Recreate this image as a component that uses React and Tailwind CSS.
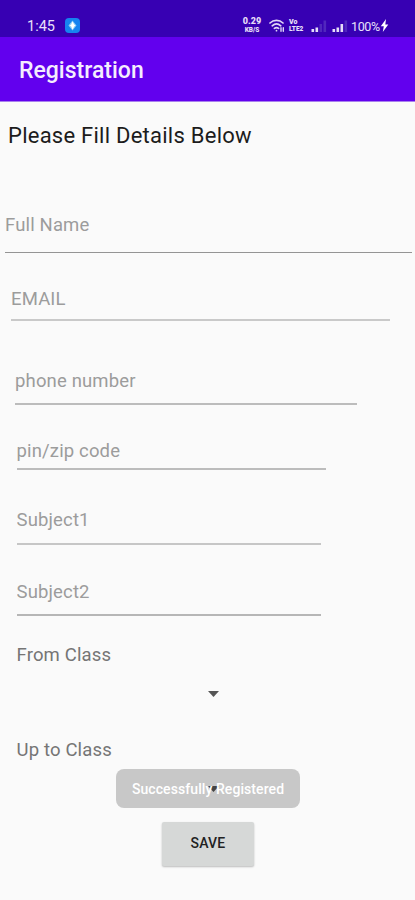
import {useState} from "react";

const FIELDS = [
    {name: 'fullName', label: 'Full Name', box: 'mt-[62px] ml-[5px] w-[407px] pb-[15px] border-[#949494]', line: 'border-b-[1.5px]'},
    {name: 'email', label: 'EMAIL', box: 'mt-[34px] ml-[11px] w-[379px] pb-2 border-[#c9c9c9]', line: 'border-b-2'},
    {name: 'phone', label: 'phone number', box: 'mt-12 ml-[15px] w-[342px] pb-2.5 border-[#bcbcbc]', line: 'border-b-2'},
    {name: 'pin', label: 'pin/zip code', box: 'mt-[34px] ml-[16.5px] w-[309px] pb-[5px] border-[#bcbcbc]', line: 'border-b-2'},
    {name: 'subject1', label: 'Subject1', box: 'mt-[38px] ml-[16.5px] w-[304px] pb-[11px] border-[#c6c6c6]', line: 'border-b-2'},
    {name: 'subject2', label: 'Subject2', box: 'mt-[35px] ml-[16.5px] w-[304px] pb-2.5 border-[#b6b6b6]', line: 'border-b-2'},
]

function NetSpeed() {
    return (
        <div className="-mb-px flex w-5 flex-col items-center font-black text-[#e6dcf8]">
            <span className="text-[9px] leading-[11px]">0.29</span>
            <span className="text-[6.5px] leading-[7px]">KB/S</span>
        </div>
    )
}

function WifiIcon() {
    return (
        <svg width="16" height="14" viewBox="0 0 16 14" fill="none" stroke="#e0d6f6" strokeWidth="1.7" strokeLinecap="round">
            <path d="M1 4C4.6 .6 10.4 .6 14 4"/>
            <path d="M3.2 6.8c2.6-2.2 6-2.2 8.6 0"/>
            <path d="M5.4 9.4c1.3-1 2.9-1 4.2 0"/>
            <path d="M7.5 11.6v.1"/>
            <path d="M12 8.8v3.4M14.3 8.8v3.4" strokeWidth="1.4"/>
        </svg>
    )
}

function SignalIcon({level}) {
    return (
        <svg width="16" height="12" viewBox="0 0 16 12">
            {[3, 4.5, 8, 11.5].map((h, i) => (
                <rect key={i} x={0.5 + i * 4} y={12 - h} width="2.6" height={h}
                      fill={i < level ? '#e6dcf8' : '#5127bd'}/>
            ))}
        </svg>
    )
}

function StatusBar() {
    return (
        <div className="flex h-[37px] items-end bg-[#3700b3] pb-1 pl-[27px] text-[#e9e0fa]">
            <span className="-mb-px w-[38px] text-[14.5px] leading-[14px]">1:45</span>
            <div className="flex size-[15px] items-center justify-center rounded-[4px] bg-[#1683f0]">
                <svg width="11" height="11" viewBox="0 0 11 11">
                    <path d="M5.5.5 9.5 5.5 5.5 10.5 1.5 5.5z" fill="#8fcdf8"/>
                    <path d="M5.5 1.5 7.2 4.6 8.5 5.5 7.2 6.6 5.5 9.5 4.2 6.6 2.8 5.5 4.2 4.6z" fill="#fff"/>
                </svg>
            </div>
            <div className="ml-[162px] flex items-end">
                <NetSpeed/>
                <div className="ml-[7px]"><WifiIcon/></div>
                <div className="ml-[4px] flex w-[17px] flex-col font-black">
                    <span className="text-[7px] leading-[8px]">Vo</span>
                    <span className="text-[6.5px] leading-[7px]">LTE2</span>
                </div>
                <div className="ml-[5px] pb-px"><SignalIcon level={2}/></div>
                <div className="ml-[5px] pb-px"><SignalIcon level={3}/></div>
                <span className="ml-[3px] text-[12.5px] leading-[13px] tracking-[-0.4px]">100%</span>
                <svg className="mb-px" width="9" height="13" viewBox="0 0 8 13">
                    <path d="M5.5 0 .3 7.2h3L2.3 13 7.8 5.4h-3z" fill="#fff"/>
                </svg>
            </div>
        </div>
    )
}

function Caret() {
    return (
        <svg width="11" height="6" viewBox="0 0 11 6">
            <path d="M0 0h11L5.5 6z" fill="#555"/>
        </svg>
    )
}

export default function App() {
    const [values, setValues] = useState({})

    const changeHandler = (e) => {
        setValues({...values, [e.target.name]: e.target.value});
    }

    return (
        <div className="h-[900px] w-[415px] overflow-hidden bg-[#fafafa] font-['Roboto',sans-serif]">
            <StatusBar/>
            <header className="flex h-[65px] items-center border-b border-[#a880ee] bg-[#6200ee] pt-[5px] pl-[19px]">
                <h1 className="text-[23px] font-medium text-[#f4edfe]">Registration</h1>
            </header>

            <form className="flex flex-col items-start" onSubmit={(e) => e.preventDefault()}>
                <h2 className="mt-[19px] ml-[8px] text-[22px] leading-[30px] tracking-[0.25px] text-[#1c1c1c]">Please Fill Details Below</h2>

                {FIELDS.map(({name, label, box, line}) => (
                    <div key={name} className={`${box} ${line}`}>
                        <input name={name} placeholder={label} value={values[name] ?? ''} onChange={changeHandler}
                               className="block h-6 w-full bg-transparent text-[18.5px] leading-6 tracking-[0.15px] text-[#444] outline-none placeholder:text-[#9c9c9c]"/>
                    </div>
                ))}

                <label className="mt-[27px] ml-[16.5px] text-[18.5px] leading-6 tracking-[0.15px] text-[#757575]">From Class</label>
                <button type="button" className="ml-[17px] flex h-[71px] w-[202px] items-start justify-end pt-6">
                    <Caret/>
                </button>

                <label className="ml-[16.5px] text-[18.5px] leading-6 tracking-[0.15px] text-[#757575]">Up to Class</label>
                <div className="relative ml-[17px] h-[60px] w-[202px]">
                    <button type="button" className="flex w-full justify-end pt-6">
                        <Caret/>
                    </button>
                    {/* toast sits over the second spinner */}
                    <div className="absolute top-[7px] left-[99px] flex h-[39px] w-[184px] items-center justify-center rounded-lg bg-black/20 pt-px text-[14px] font-medium tracking-[0.08px] whitespace-nowrap text-white">
                        Successfully Registered
                    </div>
                </div>

                <button type="submit" className="ml-[162px] h-[44px] w-[92px] rounded-[2px] bg-[#d6d8d7] pb-0.5 text-[14px] font-medium tracking-[0.2px] text-[#222] shadow-[0_1px_2px_rgba(0,0,0,0.25)]">
                    SAVE
                </button>
            </form>
        </div>
    )
}
